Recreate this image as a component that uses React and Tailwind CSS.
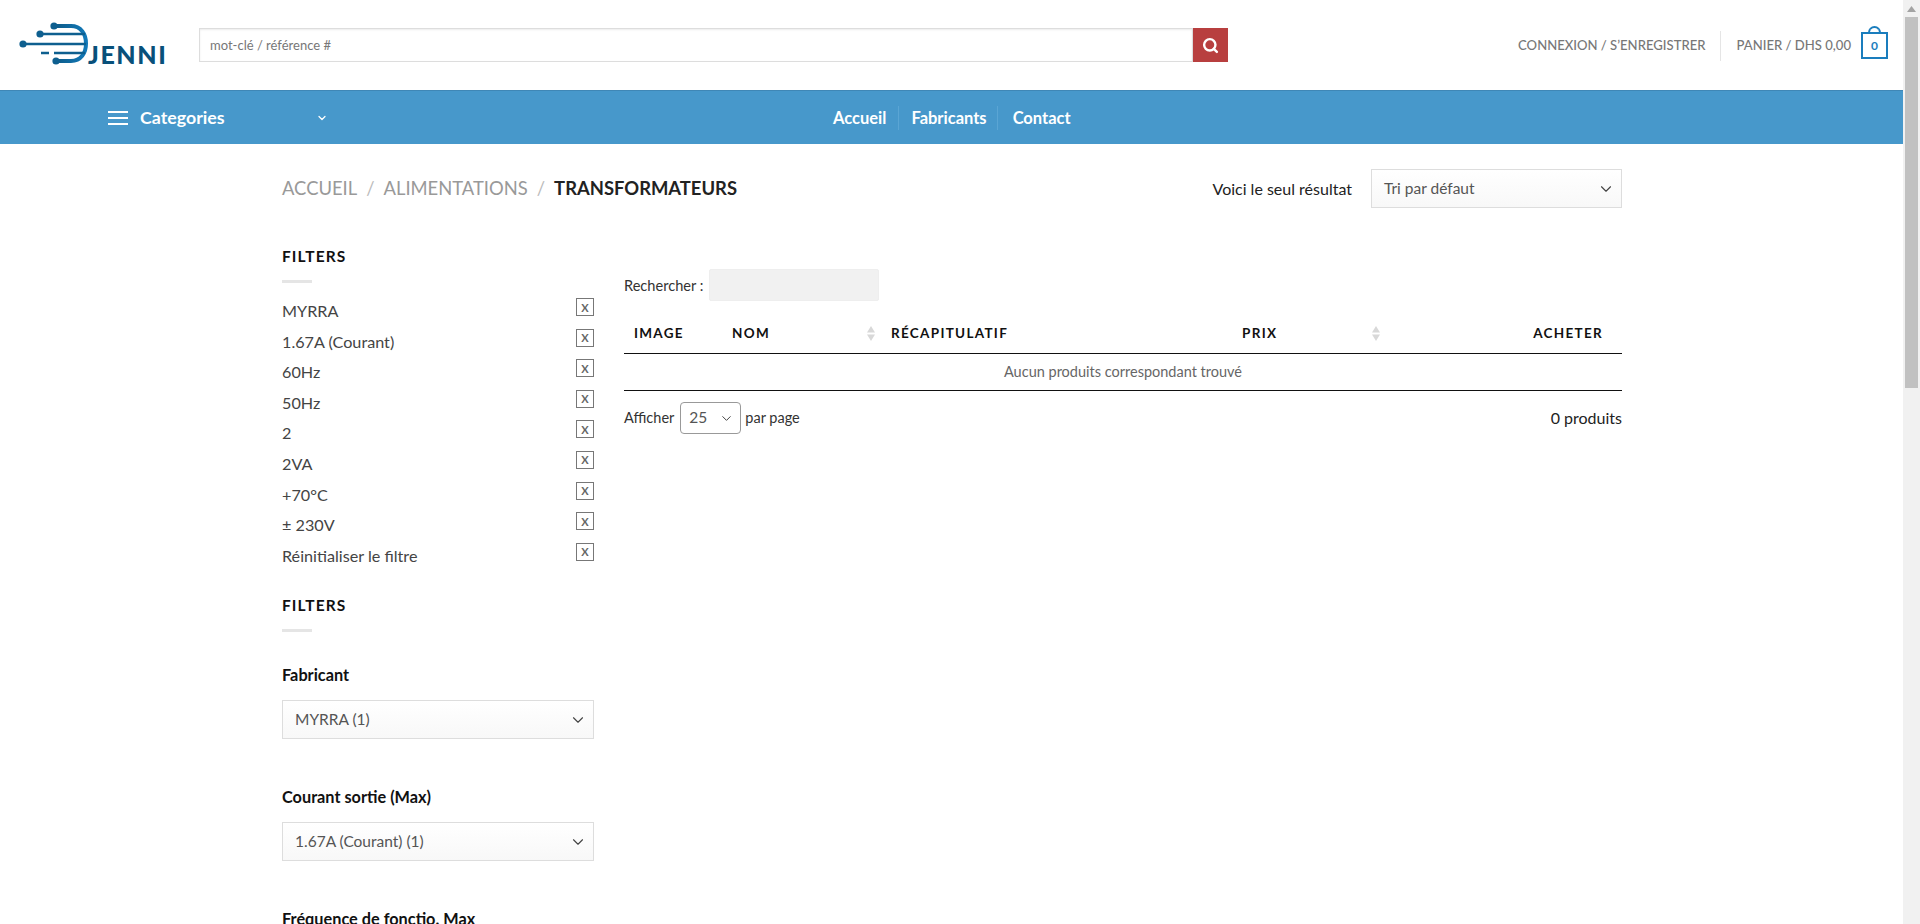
import { ChevronDown, Search } from 'lucide-react';

const activeFilters = ['MYRRA', '1.67A (Courant)', '60Hz', '50Hz', '2', '2VA', '+70°C', '± 230V', 'Réinitialiser le filtre'];

const Logo = () => (
    <div className="relative w-[150px] h-[50px] shrink-0">
        <svg width="72" height="46" viewBox="0 0 72 46" className="absolute left-[18px] top-0" fill="none">
            <defs>
                <linearGradient id="lg" x1="0" y1="0" x2="1" y2="0">
                    <stop offset="0" stopColor="#0d5a87" />
                    <stop offset="1" stopColor="#1279b8" />
                </linearGradient>
            </defs>
            <path d="M35 6H52C62 6 67 14 67 23.5C67 33 62 41 52 41H37" stroke="url(#lg)" strokeWidth="4" />
            <path d="M21 14H66M4 24H67M35 33H66M22 33H30" stroke="#0e5f8f" strokeWidth="2.5" />
            <circle cx="35" cy="6" r="3.6" fill="#0e5f8f" />
            <circle cx="21" cy="14" r="3.6" fill="#0e5f8f" />
            <circle cx="4" cy="24" r="3.6" fill="#0e5f8f" />
            <circle cx="37" cy="41" r="3.6" fill="#0e5f8f" />
        </svg>
        <span className="absolute left-[87px] top-[22px] text-[25px] leading-[25px] font-black tracking-[1.6px] text-[#08507a]">JENNI</span>
    </div>
);

const Select = ({ label, className }) => (
    <div className={`flex items-center justify-between h-[39px] border border-[#ddd] bg-gradient-to-b from-white to-[#f8f8f8] pl-3 pr-[6px] text-[#555] text-[15.5px] ${className}`}>
        <span>{label}</span>
        <ChevronDown size={18} strokeWidth={1.5} className="text-[#444]" />
    </div>
);

const SortArrows = () => (
    <svg width="8" height="15" viewBox="0 0 8 15" className="text-[#d8d8d8]" fill="currentColor">
        <path d="M4 0L8 6.5H0ZM4 15L0 8.5H8Z" />
    </svg>
);

const App = () => {
    return (
        <div className="flex h-[924px] overflow-hidden bg-white font-['Lato','Liberation_Sans',sans-serif]">
            <div className="flex-1 min-w-0">
                {/* header */}
                <header className="flex items-center h-[90px] pl-[1px] pr-[15px]">
                    <Logo />
                    <div className="flex ml-[48px] w-[1029px] h-[34px]">
                        <div className="flex-1 flex items-center border border-[#ddd] shadow-[inset_0_1px_2px_rgba(0,0,0,0.08)] px-[10px] pt-[1px] text-[13px] text-[#777]">mot-clé / référence #</div>
                        <div className="w-[35px] bg-[#b83f3f] flex items-center justify-center">
                            <Search size={17} strokeWidth={3.4} className="text-white" />
                        </div>
                    </div>
                    <div className="flex-1" />
                    <div className="flex items-center mt-[1px] text-[13.1px] text-[#777]">
                        <span className="font-medium">CONNEXION / S’ENREGISTRER</span>
                        <span className="w-px h-[30px] bg-[#e5e5e5] mx-[15px]" />
                        <span className="font-medium">PANIER / DHS 0,00</span>
                        <div className="relative ml-[10px] w-[27px] h-[27px] border-2 border-[#1a7dbd] flex items-center justify-center text-[12px] font-bold text-[#1a7dbd]">
                            0
                            <span className="absolute -top-[8px] left-[5px] w-[13px] h-[7px] border-2 border-b-0 border-[#1a7dbd] rounded-t-full" />
                        </div>
                    </div>
                </header>

                {/* nav */}
                <nav className="flex items-center h-[54px] bg-[#4798cb] border-t border-[#3f87b6] text-white font-bold">
                    <div className="flex items-center w-[833px] pl-[108px]">
                        <svg width="20" height="14" viewBox="0 0 20 14" className="shrink-0" stroke="currentColor" strokeWidth="2">
                            <path d="M0 1H20M0 7H20M0 13H20" />
                        </svg>
                        <span className="ml-[12px] text-[17.8px] -mt-[1px]">Categories</span>
                        <ChevronDown size={12} strokeWidth={2.5} className="ml-[91px]" />
                    </div>
                    <div className="flex items-center text-[16.5px] pt-[1px]">
                        <span className="pr-[12px] border-r border-[#5aa5d4]">Accueil</span>
                        <span className="pl-[12px] pr-[10px] border-r border-[#5aa5d4]">Fabricants</span>
                        <span className="pl-[15px]">Contact</span>
                    </div>
                </nav>

                {/* page title row */}
                <div className="w-[1340px] ml-[282px]">
                    <div className="flex items-center justify-between mt-[25px] h-[39px]">
                        <div className="text-[18.4px] text-[#999]">
                            <span>ACCUEIL</span>
                            <span className="mx-[9px] text-[#bbb]">/</span>
                            <span>ALIMENTATIONS</span>
                            <span className="mx-[9px] text-[#bbb]">/</span>
                            <span className="font-bold text-[#222]">TRANSFORMATEURS</span>
                        </div>
                        <div className="flex items-center">
                            <span className="text-[16px] text-[#222] mr-[19px]">Voici le seul résultat</span>
                            <Select label="Tri par défaut" className="w-[251px]" />
                        </div>
                    </div>

                    <div className="flex mt-[38px]">
                        {/* sidebar */}
                        <aside className="w-[312px] shrink-0">
                            <h3 className="-mt-[1px] text-[15.5px] font-bold tracking-[1.1px] text-[#111] leading-[22px]">FILTERS</h3>
                            <div className="w-[30px] h-[3px] bg-[#e5e5e5] mt-[13px] mb-[13px]" />
                            <ul>
                                {activeFilters.map((f) => (
                                    <li key={f} className="flex justify-between h-[30.6px] text-[16.2px] text-[#444] leading-[30px]">
                                        <span>{f}</span>
                                        <span className="w-[18px] h-[18px] mt-[2px] border border-[#777] flex items-center justify-center text-[11px] font-bold text-[#666] leading-none">X</span>
                                    </li>
                                ))}
                            </ul>
                            <h3 className="mt-[23px] text-[15.5px] font-bold tracking-[1.1px] text-[#111] leading-[22px]">FILTERS</h3>
                            <div className="w-[30px] h-[3px] bg-[#e5e5e5] mt-[13px]" />
                            <h4 className="mt-[32px] text-[16.3px] font-bold text-[#111] leading-[22px]">Fabricant</h4>
                            <Select label="MYRRA (1)" className="mt-[14px]" />
                            <h4 className="mt-[47px] text-[16.3px] font-bold text-[#111] leading-[22px]">Courant sortie (Max)</h4>
                            <Select label="1.67A (Courant) (1)" className="mt-[14px]" />
                            <h4 className="mt-[47px] text-[16.3px] font-bold text-[#111] leading-[22px]">Fréquence de fonctio. Max</h4>
                        </aside>

                        {/* results */}
                        <main className="w-[998px] ml-[30px]">
                            <div className="flex items-center mt-[23px]">
                                <span className="text-[14.6px] text-[#333] mr-[6px] pt-[2px]">Rechercher :</span>
                                <div className="w-[170px] h-[32px] bg-[#f1f1f1] rounded-[2px] border border-[#eee]" />
                            </div>
                            <div className="flex items-center h-[47px] mt-[6px] pt-[6px] border-b border-[#111] text-[13.5px] font-bold tracking-[1.3px] text-[#111]">
                                <span className="w-[108px] pl-[10px]">IMAGE</span>
                                <div className="w-[143px] flex justify-between items-center"><span>NOM</span><SortArrows /></div>
                                <span className="ml-[16px] w-[351px]">RÉCAPITULATIF</span>
                                <div className="w-[138px] flex justify-between items-center"><span>PRIX</span><SortArrows /></div>
                                <span className="flex-1 text-right pr-[19px]">ACHETER</span>
                            </div>
                            <div className="h-[37px] flex items-center justify-center border-b border-[#111] text-[14.5px] text-[#666]">Aucun produits correspondant trouvé</div>
                            <div className="flex items-center justify-between mt-[11px] text-[14.5px] text-[#333]">
                                <div className="flex items-center">
                                    <span>Afficher</span>
                                    <div className="flex items-center justify-between w-[61px] h-[32px] ml-[6px] mr-[4px] border border-[#999] rounded-[4px] pl-[8px] pr-[6px] text-[15.5px] text-[#555]">
                                        25
                                        <ChevronDown size={15} strokeWidth={1.6} className="text-[#444]" />
                                    </div>
                                    <span>par page</span>
                                </div>
                                <span className="text-[16px] text-[#222] -mt-[1px]">0 produits</span>
                            </div>
                        </main>
                    </div>
                </div>
            </div>

            {/* window scrollbar */}
            <div className="w-[17px] shrink-0 bg-[#f1f1f1] flex flex-col items-center">
                <div className="h-[17px] flex items-center justify-center">
                    <svg width="9" height="6" viewBox="0 0 9 6"><path d="M4.5 0L9 6H0Z" fill="#a3a3a3" /></svg>
                </div>
                <div className="w-[13px] h-[371px] bg-[#c1c1c1]" />
            </div>
        </div>
    );
};

export default App;
